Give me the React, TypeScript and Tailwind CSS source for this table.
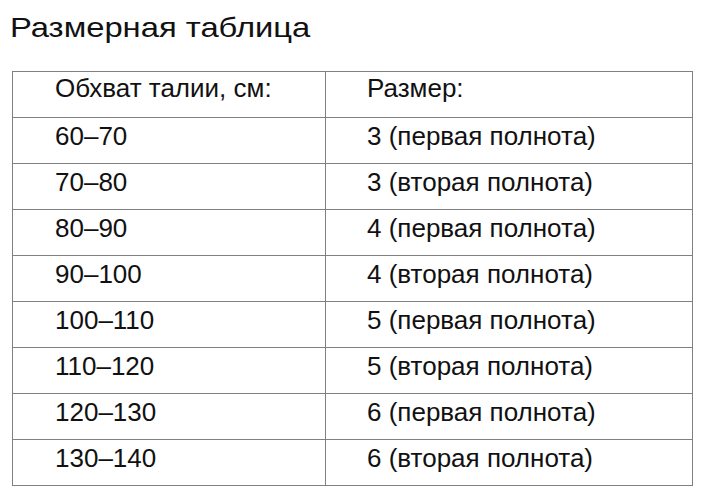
const rows: [string, string][] = [
  ["Обхват талии, см:", "Размер:"],
  ["60–70", "3 (первая полнота)"],
  ["70–80", "3 (вторая полнота)"],
  ["80–90", "4 (первая полнота)"],
  ["90–100", "4 (вторая полнота)"],
  ["100–110", "5 (первая полнота)"],
  ["110–120", "5 (вторая полнота)"],
  ["120–130", "6 (первая полнота)"],
  ["130–140", "6 (вторая полнота)"],
];

export default function App() {
  return (
    <div
      className="w-[708px] h-[500px] bg-white text-[#111]"
      style={{ fontFamily: '"Liberation Sans", Arial, sans-serif' }}
    >
      <h1 className="pl-[10px] pt-[11px] text-[28px] leading-[34px] font-normal">
        <span className="inline-block origin-left scale-x-[1.17]">Размерная таблица</span>
      </h1>
      <div className="ml-[12px] mt-[26px] w-[681px] border border-[#808080]">
        {rows.map((r, i) => (
          <div
            key={i}
            className={`grid grid-cols-[313px_1fr] ${i > 0 ? "h-[46px] border-t border-[#808080]" : "h-[45px]"}`}
          >
            <div
              className={`border-r border-[#808080] pl-[42px] text-[26px] leading-[30px] ${i > 0 ? "pt-[3px]" : "pt-[1px]"}`}
            >
              {r[0]}
            </div>
            <div className={`pl-[41px] text-[26px] leading-[30px] ${i > 0 ? "pt-[3px]" : "pt-[1px]"}`}>
              {r[1]}
            </div>
          </div>
        ))}
      </div>
    </div>
  );
}
